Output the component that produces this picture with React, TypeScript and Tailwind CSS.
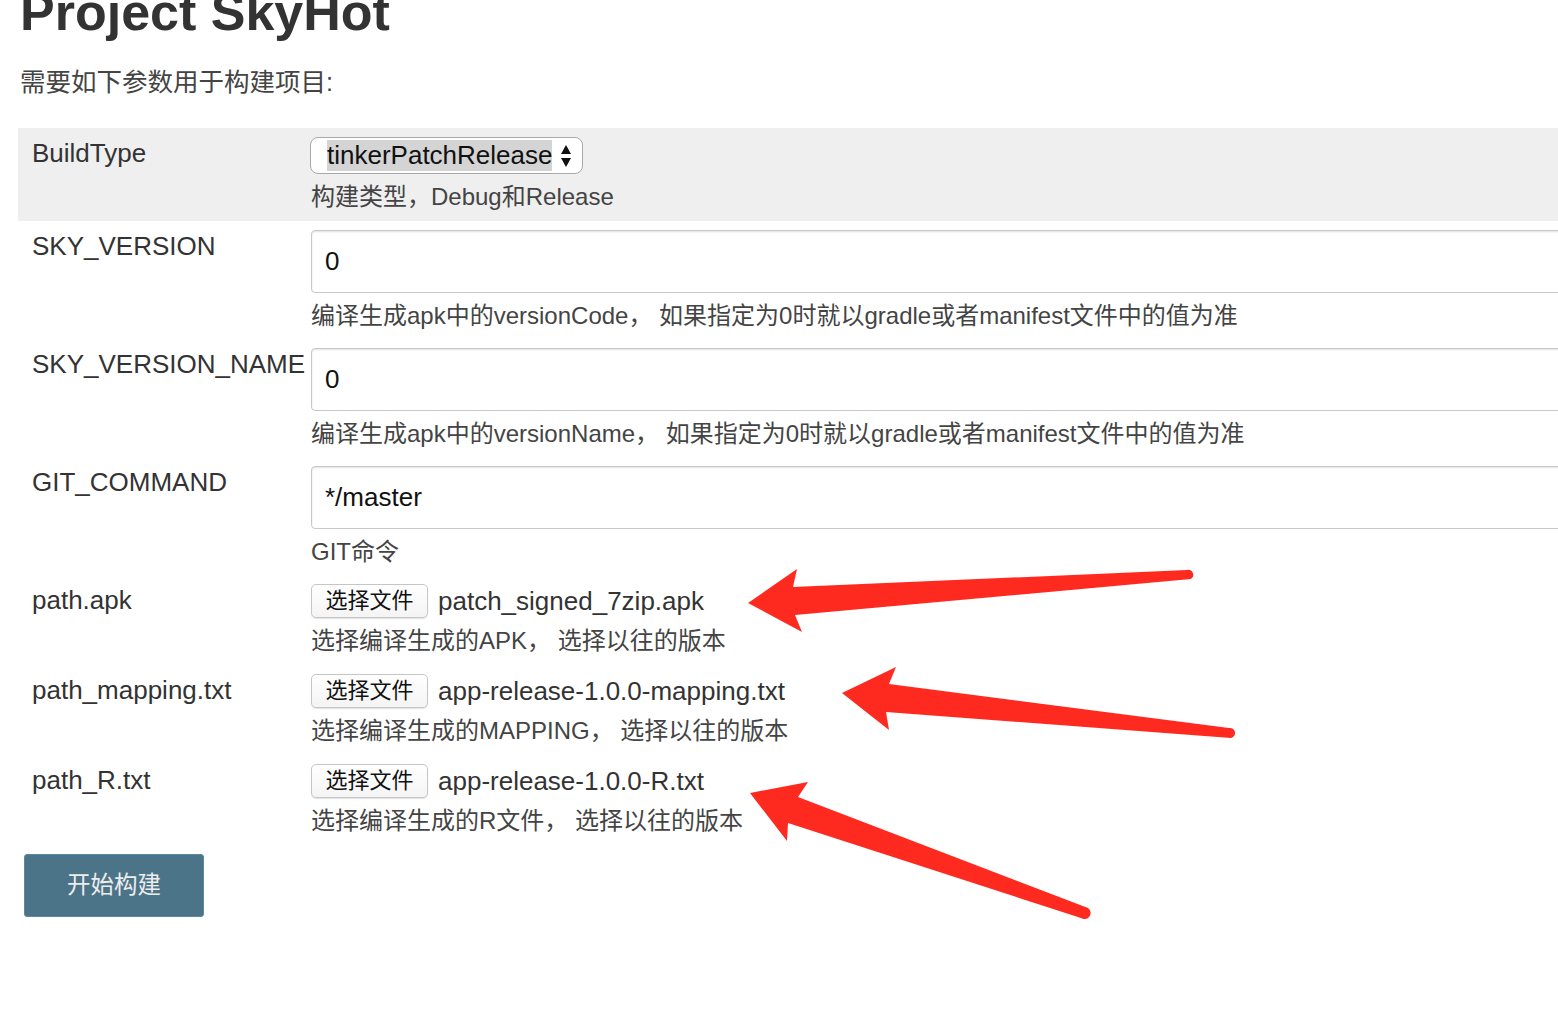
import React from "react";

const font = { fontFamily: '"Liberation Sans", "Noto Sans CJK SC", sans-serif' };

type TextRow = { label: string; value: string; desc: string };
type FileRow = { label: string; file: string; desc: string };

const textRows: TextRow[] = [
  { label: "SKY_VERSION", value: "0", desc: "编译生成apk中的versionCode， 如果指定为0时就以gradle或者manifest文件中的值为准" },
  { label: "SKY_VERSION_NAME", value: "0", desc: "编译生成apk中的versionName， 如果指定为0时就以gradle或者manifest文件中的值为准" },
  { label: "GIT_COMMAND", value: "*/master", desc: "GIT命令" },
];

const fileRows: FileRow[] = [
  { label: "path.apk", file: "patch_signed_7zip.apk", desc: "选择编译生成的APK， 选择以往的版本" },
  { label: "path_mapping.txt", file: "app-release-1.0.0-mapping.txt", desc: "选择编译生成的MAPPING， 选择以往的版本" },
  { label: "path_R.txt", file: "app-release-1.0.0-R.txt", desc: "选择编译生成的R文件， 选择以往的版本" },
];

function Row({ label, className, children }: { label: string; className: string; children: React.ReactNode }) {
  return (
    <div className={`flex w-[1560px] pt-[9px] ${className}`}>
      <div className="w-[292px] shrink-0 pl-[14px] pt-[1px] text-[26px] leading-[30px] text-[#333] whitespace-nowrap">{label}</div>
      <div className="flex-1 flex flex-col gap-[8px]">{children}</div>
    </div>
  );
}

function Desc({ children }: { children: React.ReactNode }) {
  return <div className="pl-[1px] text-[24px] leading-[30px] text-[#444] whitespace-nowrap">{children}</div>;
}

function SelectArrows() {
  return (
    <svg width="12" height="26" viewBox="0 0 12 26" className="ml-[8px]">
      <path d="M6 2 L11 11 L1 11 Z" fill="#111" />
      <path d="M1 15 L11 15 L6 24 Z" fill="#111" />
    </svg>
  );
}

function Arrows() {
  return (
    <svg className="absolute left-0 top-0 pointer-events-none" width="1558" height="1026" viewBox="0 0 1558 1026">
      <g fill="#ff2a1f">
        <path d="M748 603 L797 569 L793 587 L1187 570 A5 5 0 0 1 1191 579 L795 615 L802 632 Z" />
        <path d="M842 693 L896 667 L889 684 L1229 728 A5 5 0 0 1 1231 738 L886 712 L889 730 Z" />
        <path d="M750 793 L808 782 L798 797 L1088 908 A5 5 0 0 1 1081 918 L788 823 L787 841 Z" />
      </g>
    </svg>
  );
}

export default function App() {
  return (
    <div className="relative w-full min-h-screen overflow-hidden bg-white" style={font}>
      <h1 className="ml-[20px] mt-[-13px] text-[52px] leading-[50px] font-bold text-[#333] whitespace-nowrap">Project SkyHot</h1>
      <p className="ml-[20px] mt-[30px] text-[25.5px] leading-[30px] text-[#444]">需要如下参数用于构建项目:</p>

      <div className="ml-[18px] mt-[31px]">
        {/* BuildType */}
        <Row label="BuildType" className="pb-[9px] bg-[#efefef]">
          <div className="flex items-center w-[273px] h-[37px] rounded-[8px] border border-[#a9a9a9] bg-white pl-[16px]">
            <span className="bg-[#d4d4d4] text-[26px] leading-[31px] text-[#111]">tinkerPatchRelease</span>
            <SelectArrows />
          </div>
          <Desc>构建类型，Debug和Release</Desc>
        </Row>

        {textRows.map((r) => (
          <Row key={r.label} label={r.label} className="pb-[8px]">
            <div className="h-[63px] w-full ml-[1px] rounded-[4px] border border-[#c8c8c8] shadow-[inset_0_1px_2px_rgba(0,0,0,0.12)] bg-white flex items-center pl-[13px] text-[26px] text-[#111]">
              {r.value}
            </div>
            <Desc>{r.desc}</Desc>
          </Row>
        ))}

        {fileRows.map((r) => (
          <Row key={r.label} label={r.label} className="pb-[9px]">
            <div className="flex items-center h-[34px]">
              <button className="ml-[1px] h-[34px] w-[117px] rounded-[5px] border border-[#c6c6c6] bg-gradient-to-b from-white to-[#f4f4f4] shadow-[0_1px_1px_rgba(0,0,0,0.12)] text-[22px] leading-[30px] text-[#111]">
                选择文件
              </button>
              <span className="ml-[10px] text-[26px] leading-[30px] text-[#333] whitespace-nowrap">{r.file}</span>
            </div>
            <Desc>{r.desc}</Desc>
          </Row>
        ))}
      </div>

      <button className="ml-[24px] mt-[9px] w-[180px] h-[63px] rounded-[3px] border border-[#5b8aa0] bg-[#4b7489] text-[23.5px] text-[#ededed]">
        开始构建
      </button>

      <Arrows />
    </div>
  );
}
